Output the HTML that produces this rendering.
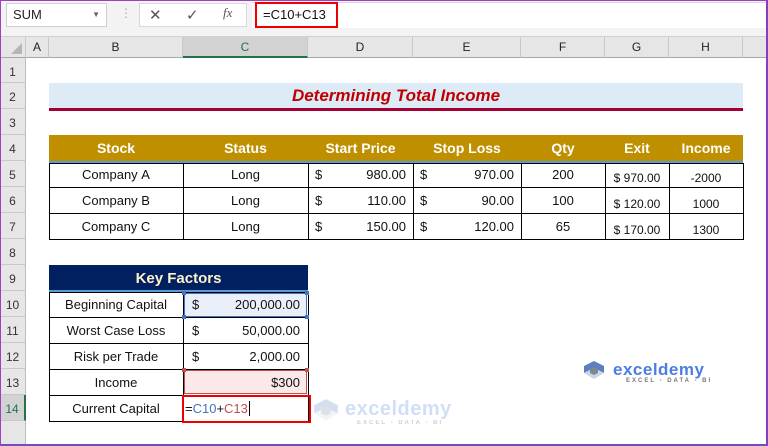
<!DOCTYPE html><html><head><style>
*{margin:0;padding:0;box-sizing:border-box}
body{width:768px;height:446px;overflow:hidden;background:#fff;font-family:"Liberation Sans",sans-serif;position:relative}
.a{position:absolute}
.rh{position:absolute;left:0;width:26px;background:#e6e6e6;border-bottom:1px solid #c8c8c8;border-right:1px solid #bdbdbd;font-size:12px;color:#333;text-align:center}
.ch{position:absolute;top:37px;height:21px;background:#e6e6e6;border-right:1px solid #c8c8c8;border-bottom:1px solid #a8a8a8;font-size:12px;color:#222;text-align:center;line-height:21px}
.h{position:absolute;font-size:14px;font-weight:bold;color:#fff;text-align:center;line-height:26px;height:26px}
</style></head><body>
<div class="a" style="left:0;top:0;width:768px;height:37px;background:#f3f3f3;border-bottom:1px solid #d0d0d0"></div>
<div class="a" style="left:6px;top:3px;width:101px;height:24px;background:#fff;border:1px solid #d0d0d0;font-size:13px;line-height:22px;padding-left:6px;color:#222">SUM<span style="position:absolute;right:6px;top:0;font-size:8px;color:#666">▼</span></div>
<div class="a" style="left:120px;top:6px;color:#aaa;font-size:12px">⋮</div>
<div class="a" style="left:139px;top:3px;width:108px;height:24px;background:#fff;border:1px solid #d8d8d8"></div>
<div class="a" style="left:149px;top:6px;font-size:15px;color:#555">✕</div>
<div class="a" style="left:186px;top:6px;font-size:15px;color:#555">✓</div>
<div class="a" style="left:223px;top:5px;font-size:13px;color:#555;font-style:italic;font-family:'Liberation Serif',serif">fx</div>
<div class="a" style="left:252px;top:2px;width:516px;height:26px;background:#fff;border-top:1px solid #d8d8d8"></div>
<div class="a" style="left:255px;top:2px;width:83px;height:26px;border:2px solid #e00;font-size:13px;line-height:22px;padding-left:6px;color:#111">=C10+C13</div>
<div class="ch" style="left:0;width:26px"></div>
<div class="a" style="left:11px;top:43px;width:0;height:0;border-left:11px solid transparent;border-bottom:11px solid #b5b5b5"></div>
<div class="ch" style="left:26px;width:23px">A</div>
<div class="ch" style="left:49px;width:134px">B</div>
<div class="ch" style="left:183px;width:125px;background:#d2d2d2;border-bottom:2px solid #217346;color:#217346">C</div>
<div class="ch" style="left:308px;width:105px">D</div>
<div class="ch" style="left:413px;width:108px">E</div>
<div class="ch" style="left:521px;width:84px">F</div>
<div class="ch" style="left:605px;width:64px">G</div>
<div class="ch" style="left:669px;width:74px">H</div>
<div class="ch" style="left:743px;width:25px;border-right:none"></div>
<div class="rh" style="top:58px;height:25px;line-height:28px">1</div>
<div class="rh" style="top:83px;height:26px;line-height:28px">2</div>
<div class="rh" style="top:109px;height:26px;line-height:28px">3</div>
<div class="rh" style="top:135px;height:26px;line-height:28px">4</div>
<div class="rh" style="top:161px;height:26px;line-height:28px">5</div>
<div class="rh" style="top:187px;height:26px;line-height:28px">6</div>
<div class="rh" style="top:213px;height:26px;line-height:28px">7</div>
<div class="rh" style="top:239px;height:26px;line-height:28px">8</div>
<div class="rh" style="top:265px;height:26px;line-height:28px">9</div>
<div class="rh" style="top:291px;height:26px;line-height:28px">10</div>
<div class="rh" style="top:317px;height:26px;line-height:28px">11</div>
<div class="rh" style="top:343px;height:26px;line-height:28px">12</div>
<div class="rh" style="top:369px;height:26px;line-height:28px">13</div>
<div class="rh" style="top:395px;height:26px;line-height:28px;background:#d2d2d2;border-right:2px solid #217346;color:#217346">14</div>
<div class="rh" style="top:421px;height:25px;border-bottom:none"></div>
<div class="a" style="left:49px;top:83px;width:694px;height:25px;background:#ddebf7;color:#c00000;font-weight:bold;font-style:italic;font-size:17px;text-align:center;line-height:26px">Determining Total Income</div>
<div class="a" style="left:49px;top:108px;width:694px;height:3px;background:#a50034"></div>
<div class="a" style="left:49px;top:135px;width:694px;height:26px;background:#bf8f00"></div>
<div class="a" style="left:49px;top:161px;width:694px;height:2px;background:#5b9bd5"></div>
<div class="h" style="left:49px;top:135px;width:134px">Stock</div>
<div class="h" style="left:183px;top:135px;width:125px">Status</div>
<div class="h" style="left:308px;top:135px;width:105px">Start Price</div>
<div class="h" style="left:413px;top:135px;width:108px">Stop Loss</div>
<div class="h" style="left:521px;top:135px;width:84px">Qty</div>
<div class="h" style="left:605px;top:135px;width:64px">Exit</div>
<div class="h" style="left:669px;top:135px;width:74px">Income</div>
<div class="a" style="left:49px;top:163px;width:695px;height:77px;border:1px solid #000"></div>
<div class="a" style="left:49px;top:187px;width:694px;height:1px;background:#000"></div>
<div class="a" style="left:49px;top:213px;width:694px;height:1px;background:#000"></div>
<div class="a" style="left:183px;top:163px;width:1px;height:76px;background:#000"></div>
<div class="a" style="left:308px;top:163px;width:1px;height:76px;background:#000"></div>
<div class="a" style="left:413px;top:163px;width:1px;height:76px;background:#000"></div>
<div class="a" style="left:521px;top:163px;width:1px;height:76px;background:#000"></div>
<div class="a" style="left:605px;top:163px;width:1px;height:76px;background:#000"></div>
<div class="a" style="left:669px;top:163px;width:1px;height:76px;background:#000"></div>
<div class="a" style="font-size:13px;color:#111;left:0;top:0">
<div class="a" style="left:49px;top:167px;width:134px;text-align:center">Company&nbsp;A</div>
<div class="a" style="left:49px;top:193px;width:134px;text-align:center">Company&nbsp;B</div>
<div class="a" style="left:49px;top:219px;width:134px;text-align:center">Company&nbsp;C</div>
<div class="a" style="left:183px;top:167px;width:125px;text-align:center">Long</div>
<div class="a" style="left:183px;top:193px;width:125px;text-align:center">Long</div>
<div class="a" style="left:183px;top:219px;width:125px;text-align:center">Long</div>
<div class="a" style="left:315px;top:167px">$</div><div class="a" style="left:308px;top:167px;width:98px;text-align:right">980.00</div>
<div class="a" style="left:315px;top:193px">$</div><div class="a" style="left:308px;top:193px;width:98px;text-align:right">110.00</div>
<div class="a" style="left:315px;top:219px">$</div><div class="a" style="left:308px;top:219px;width:98px;text-align:right">150.00</div>
<div class="a" style="left:420px;top:167px">$</div><div class="a" style="left:413px;top:167px;width:101px;text-align:right">970.00</div>
<div class="a" style="left:420px;top:193px">$</div><div class="a" style="left:413px;top:193px;width:101px;text-align:right">90.00</div>
<div class="a" style="left:420px;top:219px">$</div><div class="a" style="left:413px;top:219px;width:101px;text-align:right">120.00</div>
<div class="a" style="left:521px;top:167px;width:84px;text-align:center">200</div>
<div class="a" style="left:521px;top:193px;width:84px;text-align:center">100</div>
<div class="a" style="left:521px;top:219px;width:84px;text-align:center">65</div>
<div class="a" style="left:605px;top:171px;width:64px;text-align:center;font-size:12px">$ 970.00</div>
<div class="a" style="left:605px;top:197px;width:64px;text-align:center;font-size:12px">$ 120.00</div>
<div class="a" style="left:605px;top:223px;width:64px;text-align:center;font-size:12px">$ 170.00</div>
<div class="a" style="left:669px;top:171px;width:74px;text-align:center;font-size:12px">-2000</div>
<div class="a" style="left:669px;top:197px;width:74px;text-align:center;font-size:12px">1000</div>
<div class="a" style="left:669px;top:223px;width:74px;text-align:center;font-size:12px">1300</div>
</div>
<div class="a" style="left:49px;top:265px;width:259px;height:26px;background:#002060"></div>
<div class="a" style="left:49px;top:290px;width:259px;height:2px;background:#5b9bd5"></div>
<div class="h" style="left:49px;top:266px;width:259px;font-size:15px;color:#fff2cc">Key Factors</div>
<div class="a" style="left:49px;top:292px;width:260px;height:130px;border:1px solid #000"></div>
<div class="a" style="left:183px;top:292px;width:1px;height:129px;background:#000"></div>
<div class="a" style="left:49px;top:317px;width:259px;height:1px;background:#000"></div>
<div class="a" style="left:49px;top:343px;width:259px;height:1px;background:#000"></div>
<div class="a" style="left:49px;top:369px;width:259px;height:1px;background:#000"></div>
<div class="a" style="left:49px;top:395px;width:259px;height:1px;background:#000"></div>
<div class="a" style="left:184px;top:293px;width:123px;height:24px;background:#eaf0fa;border:1px solid #4472c4"></div>
<div class="a" style="left:184px;top:370px;width:123px;height:24px;background:#fbe9e9;border:1px solid #c0504d"></div>
<div class="a" style="left:182px;top:291px;width:4px;height:4px;background:#4472c4"></div>
<div class="a" style="left:305px;top:291px;width:4px;height:4px;background:#4472c4"></div>
<div class="a" style="left:182px;top:315px;width:4px;height:4px;background:#4472c4"></div>
<div class="a" style="left:305px;top:315px;width:4px;height:4px;background:#4472c4"></div>
<div class="a" style="left:182px;top:368px;width:4px;height:4px;background:#c0504d"></div>
<div class="a" style="left:305px;top:368px;width:4px;height:4px;background:#c0504d"></div>
<div class="a" style="left:182px;top:395px;width:129px;height:28px;border:2px solid #e00"></div>
<div class="a" style="font-size:13px;color:#111;left:0;top:0">
<div class="a" style="left:49px;top:297px;width:134px;text-align:center">Beginning Capital</div>
<div class="a" style="left:49px;top:323px;width:134px;text-align:center">Worst Case Loss</div>
<div class="a" style="left:49px;top:349px;width:134px;text-align:center">Risk per Trade</div>
<div class="a" style="left:49px;top:375px;width:134px;text-align:center">Income</div>
<div class="a" style="left:49px;top:401px;width:134px;text-align:center">Current Capital</div>
<div class="a" style="left:192px;top:297px">$</div><div class="a" style="left:183px;top:297px;width:117px;text-align:right">200,000.00</div>
<div class="a" style="left:192px;top:323px">$</div><div class="a" style="left:183px;top:323px;width:117px;text-align:right">50,000.00</div>
<div class="a" style="left:192px;top:349px">$</div><div class="a" style="left:183px;top:349px;width:117px;text-align:right">2,000.00</div>
<div class="a" style="left:183px;top:375px;width:117px;text-align:right">$300</div>
<div class="a" style="left:185px;top:401px">=<span style="color:#4472c4">C10</span>+<span style="color:#c0504d">C13</span><span style="border-left:1px solid #000;margin-left:1px"></span></div>
</div>
<div class="a" style="left:583px;top:360px;width:22px;height:20px">
<svg width="22" height="22" viewBox="0 0 22 22"><polygon points="11,1 21,6 21,13 11,8 1,13 1,6" fill="#5b7fbf"/><polygon points="1,13 11,8 21,13 11,19" fill="#c9d6e6"/><polygon points="7,9 11,7 15,9 15,13 11,15 7,13" fill="#7c8796"/></svg></div>
<div class="a" style="left:613px;top:360px;font-size:17px;font-weight:bold;color:#4a7fe0;letter-spacing:0.5px">exceldemy</div>
<div class="a" style="left:626px;top:378px;font-size:6px;font-weight:bold;color:#777;letter-spacing:2px">EXCEL - DATA - BI</div>
<div class="a" style="left:313px;top:398px;width:26px;height:26px;opacity:0.25"><svg width="26" height="26" viewBox="0 0 22 22"><polygon points="11,1 21,6 21,13 11,8 1,13 1,6" fill="#5b7fbf"/><polygon points="1,13 11,8 21,13 11,19" fill="#c9d6e6"/><polygon points="7,9 11,7 15,9 15,13 11,15 7,13" fill="#7c8796"/></svg></div>
<div class="a" style="left:345px;top:398px;font-size:20px;font-weight:bold;color:#4a7fe0;opacity:0.25;letter-spacing:0.5px">exceldemy</div>
<div class="a" style="left:357px;top:420px;font-size:6px;font-weight:bold;color:#777;opacity:0.35;letter-spacing:2px">EXCEL - DATA - BI</div>
<div class="a" style="left:0;top:0;width:768px;height:446px;border:1px solid #a040c0;border-right:2px solid #8040c0;border-bottom:2px solid #7050c0"></div>
</body></html>
